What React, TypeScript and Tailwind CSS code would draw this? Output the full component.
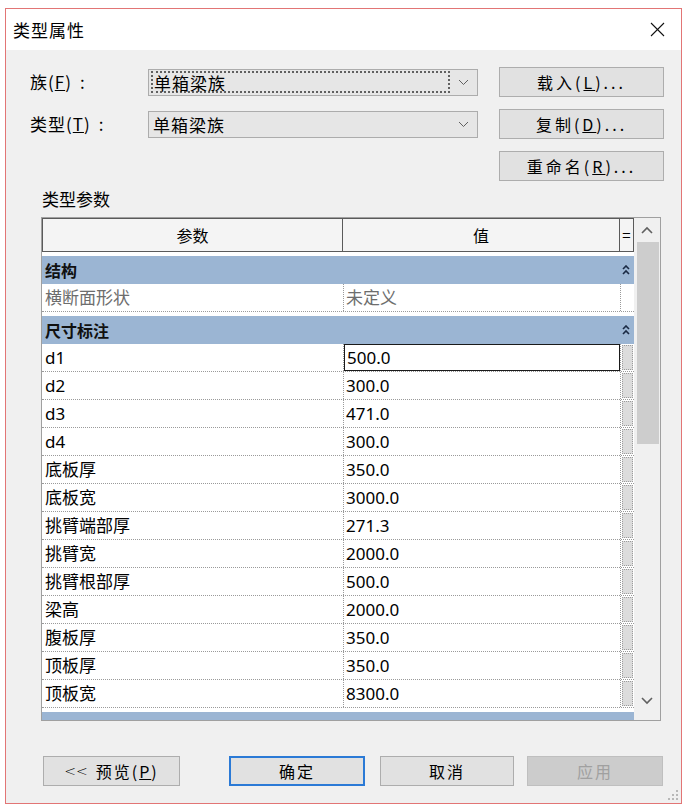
import React from "react";

const font = { fontFamily: '"Noto Sans CJK SC", "Noto Sans", sans-serif' };
const tableFont = { fontFamily: '"Noto Sans", "Noto Sans CJK SC", sans-serif' };

const rows: [string, string][] = [
  ["d1", "500.0"],
  ["d2", "300.0"],
  ["d3", "471.0"],
  ["d4", "300.0"],
  ["底板厚", "350.0"],
  ["底板宽", "3000.0"],
  ["挑臂端部厚", "271.3"],
  ["挑臂宽", "2000.0"],
  ["挑臂根部厚", "500.0"],
  ["梁高", "2000.0"],
  ["腹板厚", "350.0"],
  ["顶板厚", "350.0"],
  ["顶板宽", "8300.0"],
];

function Chevron() {
  return (
    <svg width="11" height="7" viewBox="0 0 11 7" className="shrink-0">
      <polyline points="1,1 5.5,5.5 10,1" fill="none" stroke="#606060" strokeWidth="1" />
    </svg>
  );
}

function DoubleCaret() {
  return (
    <svg width="8" height="10" viewBox="0 0 8 10">
      <polyline points="1,4 4,1 7,4" fill="none" stroke="#1a2a44" strokeWidth="1.6" />
      <polyline points="1,9 4,6 7,9" fill="none" stroke="#1a2a44" strokeWidth="1.6" />
    </svg>
  );
}

function Btn({ children, className = "" }: { children: React.ReactNode; className?: string }) {
  return (
    <div
      className={
        "h-[30px] flex items-center justify-center bg-[#e1e1e1] border border-[#adadad] text-[16px] text-black " +
        className
      }
    >
      {children}
    </div>
  );
}

function GroupRow({ label }: { label: string }) {
  return (
    <div className="mt-[4px] h-[28px] shrink-0 bg-[#9bb5d3] flex items-center justify-between pl-[3px] pr-[4px]">
      <span className="text-[16px] font-bold text-[#101010]" style={font}>
        {label}
      </span>
      <DoubleCaret />
    </div>
  );
}

export default function App() {
  return (
    <div className="w-[687px] h-[808px] bg-white pt-[8px] pl-[5px]" style={font}>
      <div className="w-[677px] h-[796px] border border-[#e27575] flex flex-col">
        {/* title bar */}
        <div className="h-[41px] shrink-0 bg-white flex items-center justify-between pl-[7px] pr-[16px]">
          <span className="text-[17px] tracking-[1px] text-black">类型属性</span>
          <svg width="15" height="15" viewBox="0 0 15 15">
            <line x1="1" y1="1" x2="14" y2="14" stroke="#111" strokeWidth="1.1" />
            <line x1="14" y1="1" x2="1" y2="14" stroke="#111" strokeWidth="1.1" />
          </svg>
        </div>

        {/* body */}
        <div className="relative flex-1 bg-[#f0f0f0] flex flex-col pt-[17px]">
          <div className="flex flex-col gap-[12px] pl-[24px]">
            <div className="flex items-center h-[30px]">
              <div className="w-[118px] text-[17px] tracking-[1px] text-black">
                族(<u>F</u>)<span className="ml-[8px]">:</span>
              </div>
              <div className="w-[330px] h-[27px] bg-[#e6e6e6] border border-[#acacac] flex items-center pl-[2px] pr-[8px] gap-[8px]">
                <div className="flex-1 h-[22px] border-[2px] border-dotted border-[#606060] flex items-center pl-[1px] text-[17px] tracking-[1px] text-black leading-none">
                  单箱梁族
                </div>
                <Chevron />
              </div>
              <Btn className="ml-[21px] w-[165px] tracking-[3px]">
                载入(<u>L</u>)...
              </Btn>
            </div>
            <div className="flex items-center h-[30px]">
              <div className="w-[118px] text-[17px] tracking-[1px] text-black">
                类型(<u>T</u>)<span className="ml-[8px]">:</span>
              </div>
              <div className="w-[330px] h-[27px] bg-[#e6e6e6] border border-[#acacac] flex items-center pl-[4px] pr-[8px] gap-[8px]">
                <div className="flex-1 text-[17px] tracking-[1px] text-black leading-none">单箱梁族</div>
                <Chevron />
              </div>
              <Btn className="ml-[21px] w-[165px] tracking-[3px]">
                复制(<u>D</u>)...
              </Btn>
            </div>
            <div className="flex items-center h-[30px]">
              <div className="w-[118px]" />
              <div className="w-[330px]" />
              <Btn className="ml-[21px] w-[165px] tracking-[3px]">
                重命名(<u>R</u>)...
              </Btn>
            </div>
          </div>

          <div className="pl-[36px] mt-[8px] text-[17px] text-black leading-[20px]">类型参数</div>

          {/* grid */}
          <div className="ml-[35px] mt-[8px] w-[620px] h-[504px] border border-[#a0a0a0] bg-white flex">
            <div className="w-[592px] h-full overflow-hidden flex flex-col" style={tableFont}>
              <div className="h-[34px] shrink-0 flex bg-[#f4f4f4] text-[16px] text-black" style={font}>
                <div className="w-[301px] border border-[#5a5a5a] flex items-center justify-center">参数</div>
                <div className="w-[277px] border-y border-r border-[#5a5a5a] flex items-center justify-center">值</div>
                <div className="w-[14px] border-y border-r border-[#5a5a5a] flex items-center justify-center text-[15px]">=</div>
              </div>

              <GroupRow label="结构" />
              <div className="h-[28px] shrink-0 flex border-b border-dotted border-[#9a9a9a] text-[17px] text-[#6d6d6d]">
                <div className="w-[301px] pl-[3px] flex items-center">横断面形状</div>
                <div className="w-[277px] border-l border-dotted border-[#9a9a9a] pl-[2px] flex items-center">未定义</div>
                <div className="w-[14px] border-l border-dotted border-[#9a9a9a]" />
              </div>

              <GroupRow label="尺寸标注" />
              {rows.map(([k, v], i) => (
                <div
                  key={k}
                  className="h-[28px] shrink-0 flex border-b border-dotted border-[#9a9a9a] text-[17px] text-black"
                >
                  <div className="w-[301px] pl-[3px] flex items-center">{k}</div>
                  <div className="w-[277px] border-l border-dotted border-[#9a9a9a] flex items-stretch">
                    {i === 0 ? (
                      <div className="flex-1 border border-[#1a1a1a] flex items-center pl-[2px]">{v}</div>
                    ) : (
                      <div className="flex-1 flex items-center pl-[2px]">{v}</div>
                    )}
                  </div>
                  <div className="w-[14px] border-l border-dotted border-[#9a9a9a] p-[1px] flex">
                    <div className="flex-1 bg-[#dcdcdc] border border-dotted border-[#9c9c9c]" />
                  </div>
                </div>
              ))}
              <GroupRow label="" />
            </div>

            {/* scrollbar */}
            <div className="w-[26px] h-full bg-[#f0f0f0] flex flex-col items-center">
              <div className="h-[24px] w-full flex items-center justify-center">
                <svg width="12" height="8" viewBox="0 0 12 8">
                  <polyline points="1,7 6,2 11,7" fill="none" stroke="#606060" strokeWidth="1.6" />
                </svg>
              </div>
              <div className="ml-[2px] w-[22px] h-[202px] bg-[#cdcdcd]" />
              <div className="flex-1" />
              <div className="h-[30px] w-full flex items-center justify-center mb-[4px]">
                <svg width="12" height="8" viewBox="0 0 12 8">
                  <polyline points="1,1 6,6 11,1" fill="none" stroke="#606060" strokeWidth="1.6" />
                </svg>
              </div>
            </div>
          </div>

          {/* bottom buttons */}
          <div className="flex mt-[35px] pl-[37px]">
            <Btn className="w-[137px] tracking-[2px]">
              <span className="mr-[8px] tracking-[0px] font-light" style={{ fontFamily: '"DejaVu Sans", sans-serif', fontSize: "14px" }}>
                &lt;&lt;
              </span>
              预览(<u>P</u>)
            </Btn>
            <div className="ml-[49px] w-[136px] h-[30px] flex items-center justify-center bg-[#e1e1e1] border-[2px] border-[#2b7ad6] text-[16px] tracking-[2px] text-black">
              确定
            </div>
            <Btn className="ml-[15px] w-[134px] tracking-[2px]">取消</Btn>
            <div className="ml-[13px] w-[136px] h-[30px] flex items-center justify-center bg-[#cccccc] border border-[#bfbfbf] text-[16px] tracking-[2px] text-[#a0a0a0]">
              应用
            </div>
          </div>

          {/* resize grip */}
          <svg className="absolute right-[2px] bottom-[2px]" width="11" height="11" viewBox="0 0 11 11">
            <rect x="8" y="0" width="2" height="2" fill="#b8b8b8" />
            <rect x="4" y="4" width="2" height="2" fill="#b8b8b8" />
            <rect x="8" y="4" width="2" height="2" fill="#b8b8b8" />
            <rect x="0" y="8" width="2" height="2" fill="#b8b8b8" />
            <rect x="4" y="8" width="2" height="2" fill="#b8b8b8" />
            <rect x="8" y="8" width="2" height="2" fill="#b8b8b8" />
          </svg>
        </div>
      </div>
    </div>
  );
}
